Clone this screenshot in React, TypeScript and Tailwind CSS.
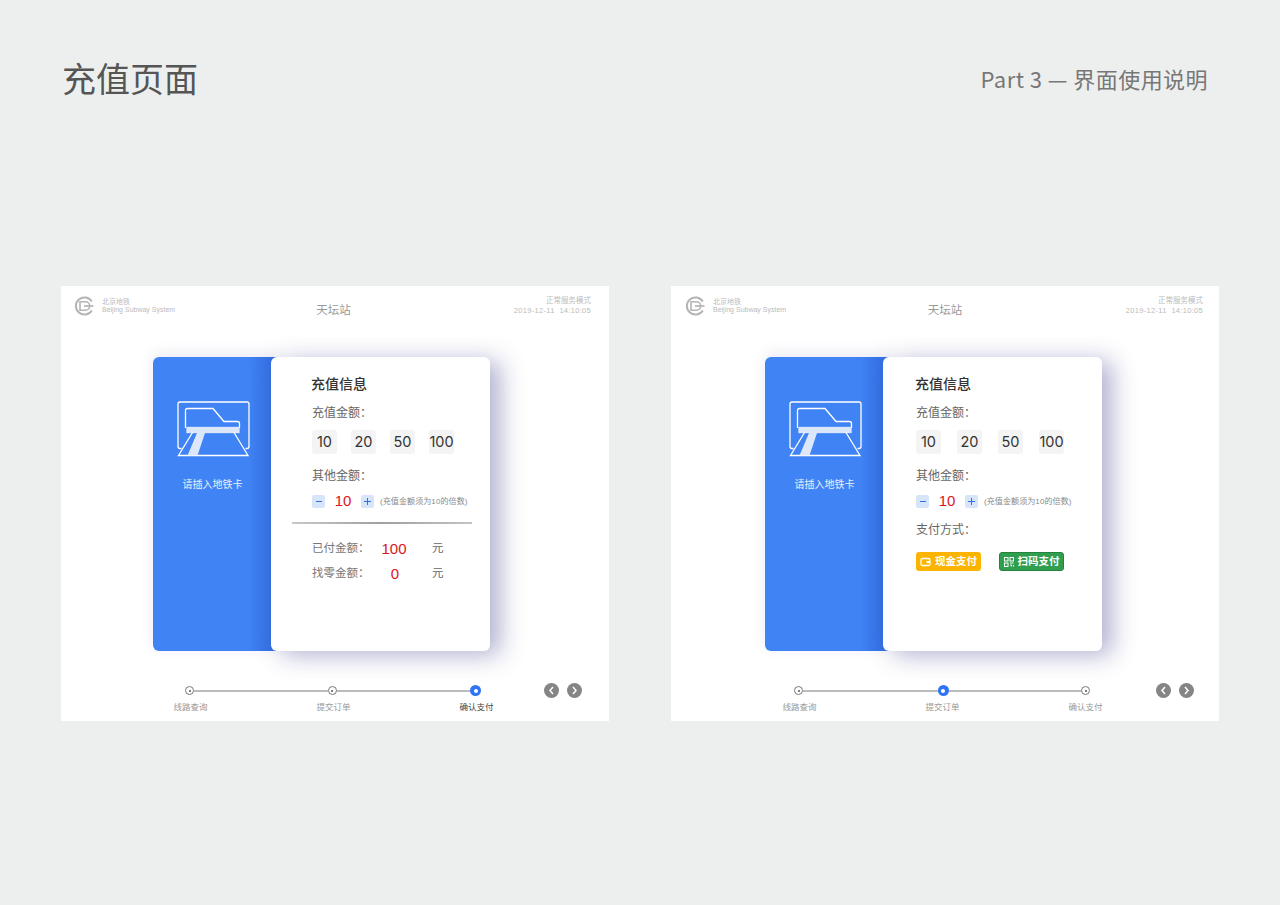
const font = { fontFamily: '"Liberation Sans", "Noto Sans CJK SC", sans-serif' };
const cjk = { fontFamily: '"Noto Sans CJK SC", sans-serif' };

const chips = ["10", "20", "50", "100"];
const steps = ["线路查询", "提交订单", "确认支付"];

function Logo() {
  return (
    <svg width="20" height="20" viewBox="0 0 20 20" fill="none" stroke="#b4b4b6">
      <path d="M17.800 5.500A8.600 8.600 0 1 0 17.800 14.500" strokeWidth="2" />
      <path d="M6 5.800H11.500A4.200 4.200 0 0 1 11.500 14.200H6Z" strokeWidth="1.600" />
      <path d="M10 10H19.500" strokeWidth="1.700" />
    </svg>
  );
}

function CardIcon() {
  return (
    <svg width="90" height="70" viewBox="0 0 90 70" fill="none" stroke="#fff" strokeWidth="1.300">
      <path d="M12.500 53.500H11Q9 53.500 9 51.500V9Q9 7 11 7H78Q80 7 80 9V51.500Q80 53.500 78 53.500H76.500" />
      <path d="M16.500 33V15.500Q16.500 13.500 18.500 13.500H44L55 26.500H68.500Q70.500 26.500 70.500 28.500V33" />
      <rect x="18" y="32.500" width="52" height="5" fill="#dce7fc" stroke="#dce7fc" />
      <path d="M23.500 37.500L9.500 60.500H79L65 37.500" />
      <path d="M28 38H36L28.500 60.500H18.500Z" fill="#dce7fc" stroke="none" />
    </svg>
  );
}

function PayCashIcon() {
  return (
    <svg width="11" height="10" viewBox="0 0 11 10" fill="none" stroke="#fff" strokeWidth="1.300">
      <rect x="1" y="1.500" width="9" height="7" rx="1.500" />
      <path d="M6.500 5H10" strokeWidth="2" />
    </svg>
  );
}

function PayQrIcon() {
  return (
    <svg width="10" height="10" viewBox="0 0 10 10" fill="none" stroke="#fff" strokeWidth="1">
      <rect x="0.500" y="0.500" width="3.500" height="3.500" />
      <rect x="6" y="0.500" width="3.500" height="3.500" />
      <rect x="0.500" y="6" width="3.500" height="3.500" />
      <path d="M6 6H9.500M6 8H7.500V9.500M9.500 8V9.500" />
    </svg>
  );
}

function Amounts({ gap }: { gap: string }) {
  return (
    <div className={`mt-[10px] flex ${gap}`}>
      {chips.map((c) => (
        <div
          key={c}
          style={{ fontFamily: "Inter, sans-serif" }}
          className="flex h-6 min-w-[25px] items-center justify-center rounded-[3px] bg-[#f4f4f4] text-[14.500px] text-[#333]"
        >
          {c}
        </div>
      ))}
    </div>
  );
}

function Stepper() {
  return (
    <div className="mt-[11px] flex h-[15px] items-center">
      <button className="flex h-[13px] w-[13px] items-center justify-center rounded-[2px] bg-[#d7e5fb]">
        <span className="h-px w-[6px] bg-[#2f6fe8]" />
      </button>
      <span className="w-[36px] text-center text-[15px] text-[#e0141a]">10</span>
      <button className="relative flex h-[13px] w-[13px] items-center justify-center rounded-[2px] bg-[#d7e5fb]">
        <span className="h-px w-[7px] bg-[#2f6fe8]" />
        <span className="absolute h-[7px] w-px bg-[#2f6fe8]" />
      </button>
      <span className="ml-[6px] whitespace-nowrap text-[8px] tracking-[0.1px] text-[#8a8a8a]">(充值金额须为10的倍数)</span>
    </div>
  );
}

function Paid() {
  return (
    <>
      <div className="mt-[13px] -ml-[20px] h-[1.500px] w-[180px] bg-gradient-to-r from-[#c8c8c8] via-[#a0a0a0] to-[#c4c4c4]" />
      <div className="mt-[16px] grid grid-cols-[69px_26px_auto] items-center gap-y-[7px] text-[11.500px] text-[#777]">
        <span>已付金额：</span>
        <span className="text-center text-[15px] leading-[18px] text-[#e0141a]">100</span>
        <span className="ml-[25px] text-[#666]">元</span>
        <span>找零金额：</span>
        <span className="pl-[2px] text-center text-[15px] leading-[18px] text-[#e0141a]">0</span>
        <span className="ml-[25px] text-[#666]">元</span>
      </div>
    </>
  );
}

function Payment() {
  return (
    <>
      <div className="mt-[14px] text-[12px] leading-[14px] text-[#666]">支付方式：</div>
      <div className="mt-[15px] flex gap-[18px]">
        <button className="flex h-[19px] w-[65px] items-center justify-center gap-[4px] rounded-[3px] bg-[#fcb400] text-[10.500px] font-bold text-white">
          <PayCashIcon />
          现金支付
        </button>
        <button className="flex h-[19px] w-[65px] items-center justify-center gap-[4px] rounded-[3px] border border-[#26833f] bg-[#2f9e4e] text-[10.500px] font-bold text-white">
          <PayQrIcon />
          扫码支付
        </button>
      </div>
    </>
  );
}

function Screen({ variant }: { variant: "paid" | "pay" }) {
  const paid = variant === "paid";
  const active = paid ? 2 : 1;
  return (
    <section className="h-[435px] w-[548px] bg-white">
      <header
        className={`grid h-[71px] grid-cols-[1fr_auto_1fr] items-start pt-[10px] ${
          paid ? "px-[13px]" : "pl-[14px] pr-[11px]"
        }`}
      >
        <div className="flex items-center gap-[8px]">
          <Logo />
          <div className="text-[7px] leading-[8px] text-[#bbb]">
            <div>北京地铁</div>
            <div>Beijing Subway System</div>
          </div>
        </div>
        <div
          className={`pt-[7px] text-[11.500px] leading-[14px] text-[#999] ${paid ? "-ml-[3px]" : "-ml-[3px]"}`}
        >
          天坛站
        </div>
        <div className="pr-[5px] text-right text-[7.500px] leading-[10px] text-[#bbb]">
          <div>正常服务模式</div>
          <div className="whitespace-pre tracking-[0.3px]">2019-12-11  14:10:05</div>
        </div>
      </header>

      <div className={`flex h-[294px] ${paid ? "ml-[92px]" : "ml-[94px]"}`}>
        <div className="flex w-[127px] flex-col items-center rounded-l-[6px] bg-gradient-to-r from-[#4083f4] from-75% to-[#2f68dc] pr-[9px] pt-[38px] shadow-[0_-4px_14px_rgba(90,90,150,0.12)]">
          <div className="ml-[4px] h-[70px] w-[90px]">
            <CardIcon />
          </div>
          <div className="ml-[1px] mt-[13px] text-[10px] leading-[14px] text-white/90">请插入地铁卡</div>
        </div>
        <div
          className={`z-10 -ml-[9px] h-[294px] w-[219px] rounded-[6px] bg-white pt-[16px] shadow-[10px_4px_24px_rgba(80,80,150,0.45)] ${
            paid ? "pl-[40px]" : "pl-[32px]"
          }`}
        >
          <div style={cjk} className="text-[14px] leading-[20px] font-medium text-[#333]">
            充值信息
          </div>
          <div className="ml-px mt-[13px] text-[12px] leading-[14px] text-[#666]">充值金额：</div>
          <div className="ml-px">
            <Amounts gap={paid ? "gap-[14px]" : "gap-[16px]"} />
            <div className="mt-[15px] text-[12px] leading-[14px] text-[#666]">其他金额：</div>
            <Stepper />
            {paid ? <Paid /> : <Payment />}
          </div>
        </div>
      </div>

      <div className={`mt-[34px] flex ${paid ? "pl-[124px]" : "pl-[123px]"}`}>
        <div className="w-[296px]">
          <div className="flex h-[11px] items-center">
            {steps.map((s, i) => (
              <div key={s} className={`flex items-center ${i < 2 ? "flex-1" : ""}`}>
                {i === active ? (
                  <span className="flex h-[11px] w-[11px] shrink-0 items-center justify-center rounded-full bg-[#2f74f5]">
                    <span className="h-[4px] w-[4px] rounded-full bg-white" />
                  </span>
                ) : (
                  <span className="flex h-[9px] w-[9px] shrink-0 items-center justify-center rounded-full border border-[#777] bg-white">
                    <span className="h-[2px] w-[2px] rounded-full bg-[#555]" />
                  </span>
                )}
                {i < 2 && <span className="h-[2px] flex-1 bg-[#bcbcbc]" />}
              </div>
            ))}
          </div>
          <div className="mt-[5px] -ml-[66px] grid w-[429px] grid-cols-3 text-center text-[8.500px] leading-[12px]">
            {steps.map((s, i) => (
              <span key={s} className={i === 2 && paid ? "text-[#444]" : "text-[#999]"}>
                {s}
              </span>
            ))}
          </div>
        </div>
        <div className={`-mt-[2px] flex h-[15px] gap-2 ${paid ? "ml-[63px]" : "ml-[66px]"}`}>
          {["M9 4L6 7.500L9 11", "M6 4L9 7.500L6 11"].map((d) => (
            <span key={d} className="h-[15px] w-[15px] rounded-full bg-[#858585]">
              <svg width="15" height="15" viewBox="0 0 15 15" fill="none" stroke="#fff" strokeWidth="1.500">
                <path d={d} />
              </svg>
            </span>
          ))}
        </div>
      </div>
    </section>
  );
}

export default function App() {
  return (
    <div style={font} className="h-[905px] w-[1280px] overflow-hidden bg-[#edefee]">
      <div style={cjk} className="flex h-[286px] items-start justify-between pl-[62px] pr-[72px] pt-[55px]">
        <h1 className="text-[34px] leading-[46px] font-normal text-[#555]">充值页面</h1>
        <div className="pt-[8px] text-[22px] leading-[30px] tracking-[0.45px] text-[#777]">Part 3 — 界面使用说明</div>
      </div>
      <div className="flex gap-[62px] pl-[61px]">
        <Screen variant="paid" />
        <Screen variant="pay" />
      </div>
    </div>
  );
}
